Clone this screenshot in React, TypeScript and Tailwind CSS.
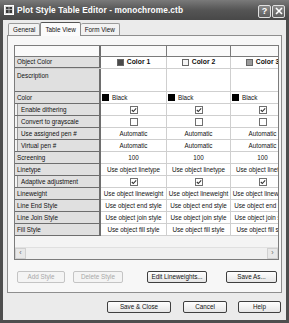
import React from 'react';

type Row = {
  label: string;
  indent?: boolean;
  kind: 'color' | 'check' | 'text';
  checked?: boolean;
  value?: string;
};

const rows: Row[] = [
  { label: 'Color', kind: 'color' },
  { label: 'Enable dithering', indent: true, kind: 'check', checked: true },
  { label: 'Convert to grayscale', indent: true, kind: 'check', checked: false },
  { label: 'Use assigned pen #', indent: true, kind: 'text', value: 'Automatic' },
  { label: 'Virtual pen #', indent: true, kind: 'text', value: 'Automatic' },
  { label: 'Screening', kind: 'text', value: '100' },
  { label: 'Linetype', kind: 'text', value: 'Use object linetype' },
  { label: 'Adaptive adjustment', indent: true, kind: 'check', checked: true },
  { label: 'Lineweight', kind: 'text', value: 'Use object lineweight' },
  { label: 'Line End Style', kind: 'text', value: 'Use object end style' },
  { label: 'Line Join Style', kind: 'text', value: 'Use object join style' },
  { label: 'Fill Style', kind: 'text', value: 'Use object fill style' },
];

const styles = [
  { name: 'Color 1', swatch: 'bg-[#4a4a4a]' },
  { name: 'Color 2', swatch: 'bg-[#f4f4f4]' },
  { name: 'Color 3', swatch: 'bg-[#9a9a9a]' },
];

function Checkbox({ checked }: { checked?: boolean }) {
  return (
    <div className="w-[8px] h-[8px] border border-[#6f6f6f] bg-white flex items-center justify-center">
      {checked && (
        <svg width="6" height="6" viewBox="0 0 6 6">
          <path d="M0.8 3 L2.3 4.5 L5.2 1.3" fill="none" stroke="#333" strokeWidth="1.1" />
        </svg>
      )}
    </div>
  );
}

function DataCell({ row, w }: { row: Row; w: string }) {
  return (
    <div className={`${w} shrink-0 h-full border-r border-[#cfcfcf] bg-white flex items-center overflow-hidden`}>
      {row.kind === 'color' && (
        <div className="flex items-center pl-[1px] gap-[3px]">
          <div className="w-[7px] h-[7px] bg-black" />
          <span>Black</span>
        </div>
      )}
      {row.kind === 'check' && (
        <div className="w-full flex justify-center">
          <Checkbox checked={row.checked} />
        </div>
      )}
      {row.kind === 'text' && (
        <div className="w-full text-center whitespace-nowrap">{row.value}</div>
      )}
    </div>
  );
}

function Btn({ children, w, disabled }: { children: React.ReactNode; w: string; disabled?: boolean }) {
  return (
    <div
      className={`${w} h-[12px] rounded-[2px] border flex items-center justify-center text-[6.3px] ${
        disabled
          ? 'border-[#c4c4c4] text-[#a8a8a8] bg-[#f4f4f4]'
          : 'border-[#3f3f3f] text-[#111] bg-gradient-to-b from-white to-[#e6e6e6]'
      }`}
    >
      {children}
    </div>
  );
}

const colW = ['w-[66px]', 'w-[64px]', 'w-[64px]'];

export default function App() {
  return (
    <div className="w-[289px] h-[323px] bg-[#4e4e4e] flex flex-col overflow-hidden font-['Liberation_Sans',Arial,sans-serif] text-[#111]">
      {/* title bar */}
      <div className="h-[20px] shrink-0 flex items-center pl-[4px] pr-[4px] bg-gradient-to-b from-[#7a7a7a] via-[#555] to-[#484848]">
        <svg width="10" height="10" viewBox="0 0 10 10">
          <rect x="0.5" y="0.5" width="9" height="9" fill="#d8d8d8" stroke="#fff" />
          <rect x="2" y="2" width="6" height="6" fill="#3a3a3a" />
          <path d="M2 4.5H8M5 2V8" stroke="#bbb" strokeWidth="0.8" />
        </svg>
        <span className="ml-[3px] text-[8.3px] font-bold text-white tracking-[0.1px]">
          Plot Style Table Editor - monochrome.ctb
        </span>
        <div className="ml-auto flex gap-[1px] pt-[2px]">
          <div className="w-[13px] h-[13px] rounded-[2px] border border-[#e0e0e0] bg-gradient-to-b from-[#8a8a8a] to-[#5e5e5e] flex items-center justify-center text-white text-[9px] font-bold leading-none">
            ?
          </div>
          <div className="w-[13px] h-[13px] rounded-[2px] border border-[#e0e0e0] bg-gradient-to-b from-[#8a8a8a] to-[#5e5e5e] flex items-center justify-center">
            <svg width="8" height="8" viewBox="0 0 8 8">
              <path d="M1 1L7 7M7 1L1 7" stroke="#fff" strokeWidth="1.6" />
            </svg>
          </div>
        </div>
      </div>

      {/* dialog body */}
      <div className="flex-1 mx-[3px] mb-[3px] bg-[#ebebeb] flex flex-col text-[6.3px]">
        {/* tabs */}
        <div className="h-[15px] shrink-0 flex items-end pl-[5px]">
          <div className="h-[12px] px-[4px] border border-b-0 border-[#9a9a9a] bg-[#f2f2f2] flex items-center rounded-t-[2px]">
            General
          </div>
          <div className="relative top-[1px] z-10 h-[14px] px-[4px] border border-b-0 border-[#8a8a8a] border-t-[#555] bg-[#fbfbfb] flex items-center rounded-t-[2px]">
            Table View
          </div>
          <div className="h-[12px] px-[4px] border border-b-0 border-l-0 border-[#9a9a9a] bg-[#f2f2f2] flex items-center rounded-t-[2px]">
            Form View
          </div>
        </div>

        {/* panel */}
        <div className="h-[258px] shrink-0 mx-[4px] border border-[#8e8e8e] bg-[#f7f7f7] flex flex-col pl-[6px] pt-[9px]">
          <div className="w-[265px] h-[215px] border border-[#7c7c7c] bg-[#f4f4f4] flex flex-col overflow-hidden">
            {/* header row */}
            <div className="h-[11px] shrink-0 flex border-b border-[#7a7a7a] bg-[#fafafa]">
              <div className="w-[86px] shrink-0 border-r-2 border-[#6e6e6e]" />
              {colW.map((w, i) => (
                <div key={i} className={`${w} shrink-0 border-r border-[#7a7a7a]`} />
              ))}
            </div>
            {/* style names */}
            <div className="h-[12px] shrink-0 flex border-b border-[#cfcfcf]">
              <div className="w-[86px] shrink-0 h-full bg-[#e0e0e0] border-r-2 border-b border-[#6e6e6e] flex items-center pl-[2px]">
                Object Color
              </div>
              {styles.map((s, i) => (
                <div key={i} className={`${colW[i]} shrink-0 h-full bg-white border-r border-[#cfcfcf] flex items-center justify-center gap-[3px]`}>
                  <div className={`w-[7px] h-[7px] border border-[#666] ${s.swatch}`} />
                  <span className="font-bold text-[6.8px] whitespace-nowrap">{s.name}</span>
                </div>
              ))}
            </div>
            {/* description */}
            <div className="h-[23px] shrink-0 flex border-b border-[#cfcfcf]">
              <div className="w-[86px] shrink-0 h-[23px] bg-[#e0e0e0] border-r-2 border-b border-[#6e6e6e] pl-[2px] pt-[2px]">
                Description
              </div>
              {colW.map((w, i) => (
                <div key={i} className={`${w} shrink-0 h-full bg-white border-r border-[#cfcfcf]`} />
              ))}
            </div>
            {rows.map((r) => (
              <div key={r.label} className="h-[12px] shrink-0 flex border-b border-[#cfcfcf]">
                <div className="w-[86px] shrink-0 h-[12px] bg-[#e0e0e0] border-r-2 border-b border-[#6e6e6e] flex">
                  {r.indent && <div className="w-[3px] h-full bg-[#f4f4f4] border-r border-[#9a9a9a]" />}
                  <div className={`flex items-center whitespace-nowrap ${r.indent ? 'pl-[3px]' : 'pl-[2px]'}`}>
                    {r.label}
                  </div>
                </div>
                {colW.map((w, i) => (
                  <DataCell key={i} row={r} w={w} />
                ))}
              </div>
            ))}
            <div className="flex-1" />
            {/* horizontal scrollbar */}
            <div className="h-[12px] shrink-0 flex bg-[#f0f0f0] border-t border-[#e0e0e0]">
              <div className="w-[11px] h-full border border-[#d0d0d0] bg-[#e8e8e8] flex items-center justify-center text-[#666] text-[7px]">
                ‹
              </div>
              <div className="flex-1" />
              <div className="w-[11px] h-full border border-[#d0d0d0] bg-[#e8e8e8] flex items-center justify-center text-[#666] text-[7px]">
                ›
              </div>
            </div>
          </div>

          {/* panel buttons */}
          <div className="flex mt-[11px] ml-[3px]">
            <Btn w="w-[48px]" disabled>Add Style</Btn>
            <div className="w-[8px]" />
            <Btn w="w-[50px]" disabled>Delete Style</Btn>
            <div className="w-[24px]" />
            <Btn w="w-[60px]">Edit Lineweights...</Btn>
            <div className="w-[19px]" />
            <Btn w="w-[51px]">Save As...</Btn>
          </div>
        </div>

        {/* dialog buttons */}
        <div className="flex mt-[8px] pl-[104px]">
          <Btn w="w-[64px]">Save &amp; Close</Btn>
          <div className="w-[12px]" />
          <Btn w="w-[44px]">Cancel</Btn>
          <div className="w-[11px]" />
          <Btn w="w-[43px]">Help</Btn>
        </div>
      </div>
    </div>
  );
}
